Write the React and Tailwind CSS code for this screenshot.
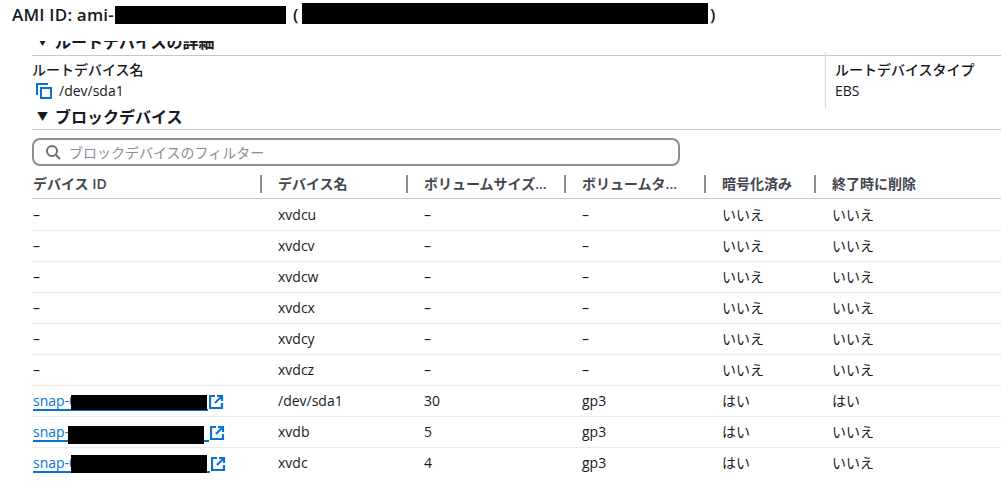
const font = "font-['Open_Sans','Noto_Sans_CJK_JP',sans-serif]";
const cols = 'grid grid-cols-[245px_146px_158px_140px_110px_1fr]';

const headers = ['デバイス ID', 'デバイス名', 'ボリュームサイズ...', 'ボリュームタ...', '暗号化済み', '終了時に削除'];

const rows = [
  { name: 'xvdcu' },
  { name: 'xvdcv' },
  { name: 'xvdcw' },
  { name: 'xvdcx' },
  { name: 'xvdcy' },
  { name: 'xvdcz' },
  { name: '/dev/sda1', snap: true, size: '30', type: 'gp3', enc: 'はい', del: 'はい', link: 'w-[175px]', mask: 'ml-[38px] top-[4px] h-[15px]' },
  { name: 'xvdb', snap: true, size: '5', type: 'gp3', enc: 'はい', del: 'いいえ', link: 'w-[176px]', mask: 'ml-[35px] top-[4px] h-[18px]' },
  { name: 'xvdc', snap: true, size: '4', type: 'gp3', enc: 'はい', del: 'いいえ', link: 'w-[177px]', mask: 'ml-[38px] top-[2px] h-[18px]' },
];

function CopyIcon() {
  return (
    <svg width="17" height="17" viewBox="0 0 17 17" fill="none" stroke="#0972d3" strokeWidth="2" className="shrink-0">
      <path d="M1 12V1h11" />
      <rect x="5" y="5" width="10" height="10" />
    </svg>
  );
}

function SearchIcon() {
  return (
    <svg width="16" height="16" viewBox="0 0 16 16" fill="none" stroke="#687078" strokeWidth="2" className="shrink-0">
      <circle cx="7" cy="7" r="5" />
      <path d="M11 11l4 4" />
    </svg>
  );
}

function LinkIcon() {
  return (
    <svg width="15" height="15" viewBox="0 0 15 15" fill="none" stroke="#0972d3" strokeWidth="2.2" className="shrink-0 mt-[1px]">
      <path d="M6 2H1v12h12V9" />
      <path d="M8 2h5v5" />
      <path d="M13 2L6 9" />
    </svg>
  );
}

function Row({ row }) {
  return (
    <div className={`${cols} h-[31px] items-center border-b border-[#e9ebed] last:border-transparent pb-[1px] text-[14px] text-[#16191f] pl-px`}>
      {row.snap ? (
        <div className="flex items-center gap-[1px] mt-[1px]">
          <span className={`relative block h-[20px] leading-[20px] border-b-2 border-[#0972d3] text-[#0972d3] ${row.link}`}>
            snap-0
            <span className={`absolute left-0 w-[136px] bg-black ${row.mask}`} />
          </span>
          <LinkIcon />
        </div>
      ) : (
        <span>–</span>
      )}
      <span>{row.name}</span>
      <span>{row.size || '–'}</span>
      <span>{row.type || '–'}</span>
      <span>{row.enc || 'いいえ'}</span>
      <span>{row.del || 'いいえ'}</span>
    </div>
  );
}

export default function App() {
  return (
    <div className={`${font} w-[1001px] h-[491px] overflow-hidden bg-white text-[#16191f]`}>
      <h1 className="flex h-[31px] items-start pl-3 pt-[3px] text-[17px] leading-[24px] font-semibold tracking-[0.012em] whitespace-nowrap">
        <span className="w-[103px]">AMI ID: ami-</span>
        <span className="mt-[3px] h-[18px] w-[171px] bg-black" />
        <span className="ml-[7px] w-[9px]">(</span>
        <span className="h-[21px] w-[406px] bg-black" />
        <span className="ml-[2px]">)</span>
      </h1>

      <div className="pl-8">
        <div className="h-[25px] overflow-hidden border-b border-[#c6c6cd] pl-[5px] pt-[10px]">
          <div className="h-[10px] overflow-hidden">
            <div className="-mt-[11px] flex items-center gap-[7px] text-[16px] leading-[24px] font-bold">
              <span className="text-[11px]">▼</span>
              <span>ルートデバイスの詳細</span>
            </div>
          </div>
        </div>

        <div className="flex h-[56px] -mt-[4px]">
          <div className="w-[794px] border-r border-[#d5dbdb] pt-[7px]">
            <div className="text-[14px] leading-[22px] font-medium">ルートデバイス名</div>
            <div className="flex items-center gap-[6px] pl-[4px] text-[14px] leading-[20px] text-[#16191f]">
              <CopyIcon />
              <span>/dev/sda1</span>
            </div>
          </div>
          <div className="pl-[9px] pt-[7px]">
            <div className="text-[14px] leading-[22px] font-medium">ルートデバイスタイプ</div>
            <div className="text-[14px] leading-[20px]">EBS</div>
          </div>
        </div>

        <div className="flex h-[22px] items-start gap-[7px] border-b border-[#c6c6cd] pl-[5px] leading-[18px]">
          <span className="text-[11px]">▼</span>
          <span className="text-[16px] font-bold">ブロックデバイス</span>
        </div>

        <div className="mt-[8px] flex h-[28px] w-[648px] items-center gap-[8px] rounded-lg border-2 border-[#8c8c94] pl-[11px]">
          <SearchIcon />
          <span className="text-[14px] text-[#8c8c94]">ブロックデバイスのフィルター</span>
        </div>

        <div className={`${cols} mt-[5px] h-[28px] items-center border-b border-[#c6c6cd] pl-px pb-[2px] text-[14px] font-semibold text-[#424650]`}>
          {headers.map((h, i) => (
            <div key={h} className="flex items-center justify-between pr-[16px]">
              <span className="whitespace-nowrap">{h}</span>
              {i < 5 && <span className="h-[18px] w-[2px] bg-[#8c8c94]" />}
            </div>
          ))}
        </div>

        <div className="mt-px">
          {rows.map((row) => (
            <Row key={row.name} row={row} />
          ))}
        </div>
      </div>
    </div>
  );
}
